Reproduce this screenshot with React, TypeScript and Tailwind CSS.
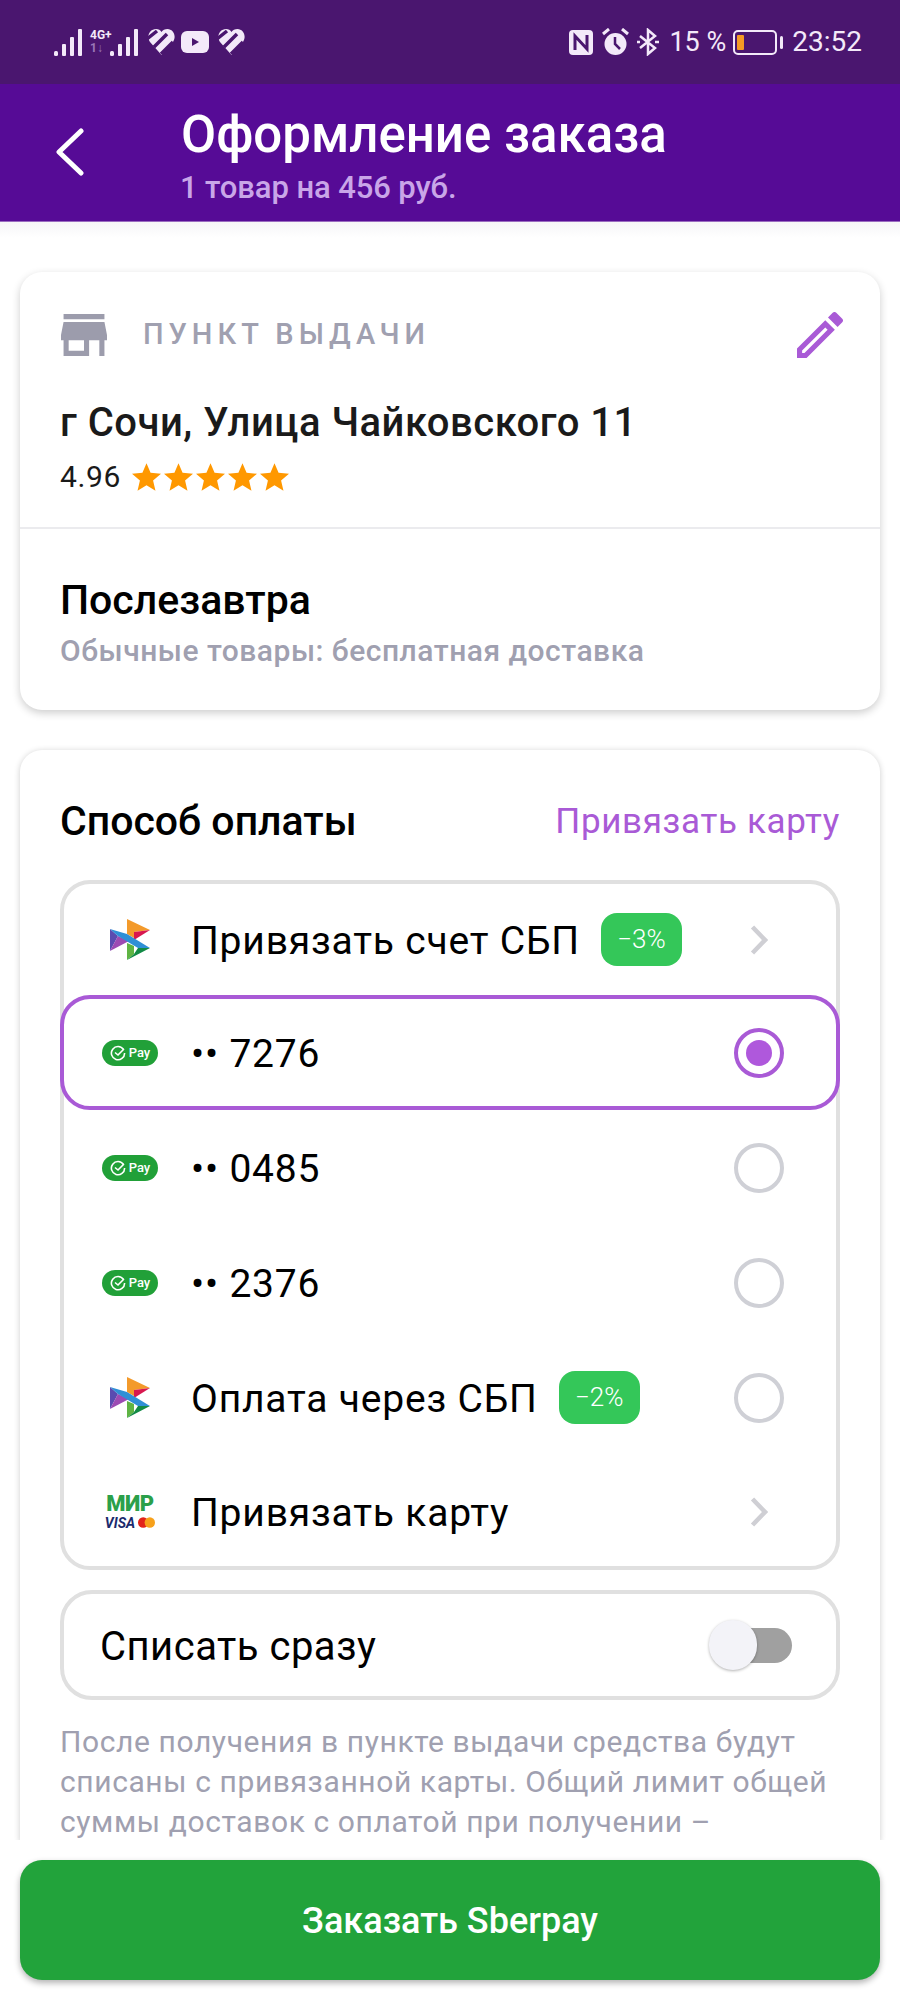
import React from 'react';

const PURPLE = '#a95ad6';

const SignalBars = () => (
  <svg width="28" height="27" viewBox="0 0 28 27" fill="#f3e9f9">
    <rect x="0" y="22" width="4" height="5" rx="1.5" />
    <rect x="8" y="15" width="4" height="12" rx="1" />
    <rect x="16" y="8" width="4" height="19" rx="1" />
    <rect x="24" y="0" width="4" height="27" rx="1" />
  </svg>
);

const StripedHeart = () => (
  <svg width="27" height="26" viewBox="0 0 27 26">
    <path d="M13.5 26 L2 13 C-2 7 2 0 8 0 C10.5 0 12.5 1 13.5 3 C14.5 1 17 0 19.5 0 C25 0 29 7 25 13 Z" fill="#f3e9f9" />
    <path d="M-1 10 L9 2 M6 18 L19 5 M13 25 L25 13" stroke="#4a166f" strokeWidth="3.5" fill="none" />
  </svg>
);

const SbpLogo = () => (
  <svg width="40" height="41" viewBox="0 0 40 41">
    <path d="M17 0 L40 11 L24 13 L24 19 L17 15 Z" fill="#f39a2b" />
    <path d="M24 13 L40 11 L24 21 Z" fill="#d8174f" />
    <path d="M0 10 L8 17 L0 32 Z" fill="#5a4bb0" />
    <path d="M0 32 L8 17 L19 22 Z" fill="#9c4bb3" />
    <path d="M17 24 L24 27 L24 35 L17 41 Z" fill="#5fb443" />
    <path d="M17 41 L40 29 L28 29 L24 35 Z" fill="#128a45" />
    <path d="M0 10 L17 15 L40 29 L28 29 L8 17 Z" fill="#2f8fd6" />
  </svg>
);

const PayLogo = () => (
  <div className="flex h-[26px] w-[56px] items-center justify-center gap-[3px] rounded-full bg-[#21a038]">
    <svg width="16" height="16" viewBox="0 0 16 16" fill="none" stroke="#fff" strokeWidth="1.6">
      <path d="M13.5 4.5 A6.6 6.6 0 1 0 14.6 8" />
      <path d="M5 7.5 L8 10 L14 4" />
    </svg>
    <span className="text-[13px] leading-none font-medium text-white">Pay</span>
  </div>
);

const CardsLogo = () => (
  <div className="flex w-[56px] flex-col items-center gap-[6px]">
    <span className="text-[22px] leading-[15px] font-black tracking-[-0.5px] text-[#2ba04a]">МИР</span>
    <div className="flex items-center gap-[3px]">
      <span className="text-[14px] leading-[12px] font-bold text-[#1a2a6c] italic">VISA</span>
      <svg width="17" height="11" viewBox="0 0 18 11">
        <circle cx="5.5" cy="5.5" r="5.5" fill="#e2231a" />
        <circle cx="12.5" cy="5.5" r="5.5" fill="#f7a11b" />
      </svg>
    </div>
  </div>
);

const Chevron = () => (
  <svg width="18" height="30" viewBox="0 0 18 30" fill="none" stroke="#cfcfd4" strokeWidth="4.5">
    <path d="M2.5 2 L15 15 L2.5 28" />
  </svg>
);

const Radio = ({ checked }: { checked?: boolean }) => (
  <div
    className={`flex h-[50px] w-[50px] items-center justify-center rounded-full border-[4px] ${
      checked ? 'border-[#a95ad6]' : 'border-[#cfd0d6]'
    }`}
  >
    {checked && <div className="h-[26px] w-[26px] rounded-full bg-[#af58dc]" />}
  </div>
);

const Badge = ({ label }: { label: string }) => (
  <div className="flex h-[53px] w-[81px] items-center justify-center rounded-[16px] bg-[#34c759] text-[26px] font-light text-white">
    {label}
  </div>
);

const PayRow = ({
  icon,
  label,
  badge,
  right,
  selected,
  height,
}: {
  icon: React.ReactNode;
  label: string;
  badge?: string;
  right: React.ReactNode;
  selected?: boolean;
  height: string;
}) => (
  <div
    className={`flex items-center ${height} ${
      selected ? 'relative -mx-[4px] rounded-[30px] border-[4px] border-[#a95ad6] bg-white' : ''
    } pl-[38px]`}
  >
    <div className="flex w-[56px] justify-center">{icon}</div>
    <span className="ml-[33px] pt-[3px] text-[39px] tracking-[0.8px] text-black">{label}</span>
    {badge && (
      <div className="ml-[21px]">
        <Badge label={badge} />
      </div>
    )}
    <div className="mr-[52px] ml-auto flex w-[50px] justify-center">{right}</div>
  </div>
);

export default function App() {
  return (
    <div className="flex h-[2000px] w-[900px] flex-col overflow-hidden bg-white [font-family:Roboto,sans-serif]">
      {/* Status bar */}
      <div className="flex h-[84px] shrink-0 items-center justify-between bg-[#4a166f] pr-[38px] pl-[54px] text-[#f3e9f9]">
        <div className="flex items-center">
          <SignalBars />
          <div className="ml-[8px] flex w-[20px] flex-col text-[12px] leading-[13px] font-bold">
            <span>4G+</span>
            <span className="text-[#9b78b8]">1↓</span>
          </div>
          <SignalBars />
          <div className="ml-[10px]">
            <StripedHeart />
          </div>
          <svg className="ml-[6px]" width="28" height="22" viewBox="0 0 28 22">
            <rect width="28" height="22" rx="6" fill="#f3e9f9" />
            <path d="M11 7 L18 11 L11 15 Z" fill="#4a166f" />
          </svg>
          <div className="ml-[9px]">
            <StripedHeart />
          </div>
        </div>
        <div className="flex items-center">
          <svg width="24" height="25" viewBox="0 0 24 25">
            <rect width="24" height="25" rx="4" fill="#f3e9f9" />
            <path d="M6 20 V6 L18 19 V5" fill="none" stroke="#4a166f" strokeWidth="3" />
          </svg>
          <svg className="ml-[9px]" width="27" height="28" viewBox="0 0 27 28">
            <circle cx="13.5" cy="16" r="11" fill="#f3e9f9" />
            <path d="M13 9 V16 L18 21" fill="none" stroke="#4a166f" strokeWidth="2.5" />
            <path d="M1 6 L7 1 M26 6 L20 1" stroke="#f3e9f9" strokeWidth="3" />
          </svg>
          <svg className="ml-[8px]" width="22" height="28" viewBox="0 0 22 28" fill="none" stroke="#f3e9f9" strokeWidth="2.5">
            <path d="M3 8 L18 20 L11 26 V2 L18 8 L3 20" />
            <path d="M0 14 H3 M18 14 H22" />
          </svg>
          <span className="ml-[10px] text-[27px] leading-none">15 %</span>
          <div className="ml-[7px] flex h-[25px] w-[44px] items-center rounded-[5px] border-2 border-[#f3e9f9] pl-[2px]">
            <div className="h-[15px] w-[7px] rounded-[1px] bg-[#f59a23]" />
          </div>
          <div className="ml-[3px] h-[13px] w-[3px] rounded-full bg-[#f3e9f9]" />
          <span className="ml-[9px] text-[28px] leading-none">23:52</span>
        </div>
      </div>

      {/* Header */}
      <div className="flex h-[138px] shrink-0 border-b border-[#9a6cc0] bg-[#560b96]">
        <div className="flex w-[181px] items-center pb-[2px] pl-[55px]">
          <svg width="30" height="48" viewBox="0 0 30 48" fill="none" stroke="#fff" strokeWidth="5" strokeLinecap="round" strokeLinejoin="round">
            <path d="M26 3 L4 24 L26 45" />
          </svg>
        </div>
        <div className="pt-[22px]">
          <div className="text-[51px] leading-[58px] font-medium text-white">Оформление заказа</div>
          <div className="mt-[7px] -ml-[1px] text-[31px] leading-[34px] font-medium tracking-[-0.1px] text-[#c9a6e8]">1 товар на 456 руб.</div>
        </div>
      </div>

      {/* Content */}
      <div className="min-h-0 flex-1 overflow-hidden bg-gradient-to-b from-[#f6f6f7] to-white to-[16px] px-[20px] pt-[50px]">
        <div className="rounded-[22px] bg-white shadow-[0_3px_8px_rgba(0,0,0,0.2)]">
          <div className="h-[255px] px-[41px]">
            <div className="flex h-[124px] items-center justify-between pt-[1px]">
              <div className="flex items-center">
                <svg width="46" height="42" viewBox="3 4 18 16" preserveAspectRatio="none" fill="#9c9cac">
                  <path d="M20 4H4v2h16V4zm1 10v-2l-1-5H4l-1 5v2h1v6h10v-6h4v6h2v-6h1zm-9 4H6v-4h6v4z" />
                </svg>
                <span className="ml-[36px] text-[29px] font-medium tracking-[5px] text-[#a0a0b0]">ПУНКТ ВЫДАЧИ</span>
              </div>
              <svg className="mr-[-4px]" width="46" height="46" viewBox="3 3 18 18" fill={PURPLE}>
                <path d="M3 17.25V21h3.75L17.81 9.94l-3.75-3.75L3 17.25zM5.92 19H5v-.92l9.06-9.06.92.92L5.92 19zM20.71 7.04c.39-.39.39-1.02 0-1.41l-2.34-2.34c-.39-.39-1.02-.39-1.41 0l-1.83 1.83 3.75 3.75 1.83-1.83z" />
              </svg>
            </div>
            <div className="-ml-[1px] text-[40px] leading-[54px] font-medium tracking-[0.5px] text-[#1a1a1a]">г Сочи, Улица Чайковского 11</div>
            <div className="mt-[11px] flex items-center">
              <span className="-ml-[1px] text-[30px] leading-[32px] tracking-[0.6px] text-[#1a1a1a]">4.96</span>
              <div className="ml-[11px] flex gap-[3px]">
                {[0, 1, 2, 3, 4].map((i) => (
                  <svg key={i} width="29" height="28" viewBox="2 2 20 19" fill="#ff9800">
                    <path d="M12 17.27 18.18 21l-1.64-7.03L22 9.24l-7.19-.61L12 2 9.19 8.63 2 9.24l5.46 4.73L5.82 21z" />
                  </svg>
                ))}
              </div>
            </div>
          </div>
          <div className="h-[183px] border-t-2 border-[#ebebee] px-[41px] pt-[47px]">
            <div className="-ml-[1px] text-[41px] leading-[48px] font-medium text-black">Послезавтра</div>
            <div className="mt-[9px] -ml-[1px] text-[30px] leading-[36px] font-medium tracking-[0.5px] text-[#a0a0b0]">Обычные товары: бесплатная доставка</div>
          </div>
        </div>

        <div className="mt-[40px] rounded-t-[22px] bg-white px-[40px] shadow-[0_1px_6px_rgba(0,0,0,0.2)]">
          <div className="flex h-[130px] items-center justify-between pt-[14px]">
            <span className="text-[41px] font-medium text-black">Способ оплаты</span>
            <span className="text-[35px] tracking-[0.65px] text-[#a95ad6]">Привязать карту</span>
          </div>
          <div className="flex h-[690px] flex-col rounded-[30px] border-[4px] border-[#e0e0e0]">
            <PayRow height="h-[111px]" icon={<SbpLogo />} label="Привязать счет СБП" badge="−3%" right={<Chevron />} />
            <PayRow height="h-[115px]" selected icon={<PayLogo />} label="•• 7276" right={<Radio checked />} />
            <PayRow height="h-[115px]" icon={<PayLogo />} label="•• 0485" right={<Radio />} />
            <PayRow height="h-[115px]" icon={<PayLogo />} label="•• 2376" right={<Radio />} />
            <PayRow height="h-[115px]" icon={<SbpLogo />} label="Оплата через СБП" badge="−2%" right={<Radio />} />
            <PayRow height="h-[111px] pt-[3px]" icon={<CardsLogo />} label="Привязать карту" right={<Chevron />} />
          </div>
          <div className="mt-[20px] flex h-[110px] items-center justify-between rounded-[32px] border-[4px] border-[#e0e0e0] pr-[44px] pl-[36px]">
            <span className="pt-[3px] text-[40px] tracking-[0.5px] text-black">Списать сразу</span>
            <div className="relative h-[35px] w-[83px]">
              <div className="absolute top-0 right-0 h-[35px] w-[60px] rounded-full bg-[#a0a0a0]" />
              <div className="absolute top-[-8px] left-0 h-[50px] w-[48px] rounded-full bg-[#f3f3f8] shadow-[0_1px_3px_rgba(0,0,0,0.3)]" />
            </div>
          </div>
          <p className="mt-[22px] text-[30px] leading-[40px] tracking-[0.6px] text-[#a0a0b0]">
            После получения в пункте выдачи средства будут списаны с привязанной карты. Общий лимит общей суммы доставок с оплатой при получении –
          </p>
        </div>
      </div>

      {/* Order button */}
      <div className="h-[160px] shrink-0 bg-white px-[20px] pt-[20px]">
        <button className="flex h-[120px] w-full items-center justify-center rounded-[22px] bg-[#22a33b] pt-[2px] text-[36px] font-medium text-white shadow-[0_3px_6px_rgba(0,0,0,0.3)]">
          Заказать Sberpay
        </button>
      </div>
    </div>
  );
}
